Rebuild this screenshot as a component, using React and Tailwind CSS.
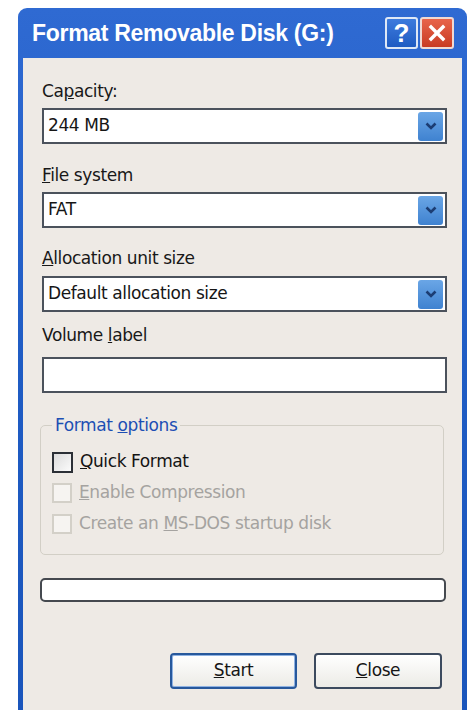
import React from "react";

const font = { fontFamily: '"DejaVu Sans", Verdana, sans-serif' };

const Combo = ({ value }) => (
  <div className="flex h-[36px] items-center justify-between border-2 border-[#4b525c] bg-white pl-[4px] pr-[2px]">
    <span className="text-[17px] tracking-[-0.4px] text-[#161616]">{value}</span>
    <div className="flex h-[29px] w-[25px] items-center justify-center rounded-[3px] bg-gradient-to-b from-[#6aa6e6] to-[#3f82d0]">
      <svg width="12" height="8" viewBox="0 0 12 8">
        <path d="M1.5 1.5 L6 6 L10.5 1.5" fill="none" stroke="#1c3d73" strokeWidth="2.6" />
      </svg>
    </div>
  </div>
);

const Check = ({ children, disabled }) => (
  <div className="flex h-[31px] items-center gap-[7px]">
    <div
      className={
        disabled
          ? "h-[20px] w-[20px] border-2 border-[#d3d0c8] bg-[#f6f4f1]"
          : "h-[21px] w-[21px] border-2 border-[#2b2f36] bg-gradient-to-br from-[#dcdcdc] to-[#fbfbfb]"
      }
    />
    <span
      className={
        disabled
          ? "text-[17px] tracking-[-0.4px] text-[#a5a3a0]"
          : "text-[17px] tracking-[-0.4px] text-[#141414]"
      }
    >
      {children}
    </span>
  </div>
);

export default function App() {
  return (
    <div className="h-[710px] overflow-hidden bg-white pl-[18px] pt-[8px]" style={font}>
      <div className="flex h-[710px] w-[449px] flex-col rounded-t-[9px] bg-gradient-to-b from-[#2f6ad2] via-[#1f5cc4] to-[#1a55bb] px-[5px]">
        {/* title bar */}
        <div className="flex h-[50px] items-center justify-between pl-[9px] pr-[8px]">
          <span
            className="text-[23px] font-bold tracking-[-0.3px] text-white"
            style={{ fontFamily: '"Liberation Sans", Arial, sans-serif' }}
          >
            Format Removable Disk (G:)
          </span>
          <div className="flex gap-[2px]">
            <div className="flex h-[32px] w-[33px] items-center justify-center rounded-[3px] border-2 border-[#dfe8f6] bg-gradient-to-b from-[#3d7bdd] to-[#1f5bc2] text-[26px] font-bold leading-none text-white" style={{ fontFamily: '"Liberation Sans", Arial, sans-serif' }}>
              ?
            </div>
            <div className="flex h-[32px] w-[34px] items-center justify-center rounded-[3px] border-2 border-[#f1d9d2] bg-gradient-to-b from-[#e8644a] to-[#c83a22]">
              <svg width="18" height="18" viewBox="0 0 18 18">
                <path d="M3 3 L15 15 M15 3 L3 15" stroke="#fff" strokeWidth="3.4" strokeLinecap="square" />
              </svg>
            </div>
          </div>
        </div>

        {/* dialog body */}
        <div className="flex flex-1 flex-col bg-[#eeeae5] pl-[19px] pr-[15px] pt-[23px] text-[#181818]">
          <span className="text-[17px] leading-[20px] tracking-[-0.4px]">
            Ca<u>p</u>acity:
          </span>
          <div className="mt-[7px]">
            <Combo value="244 MB" />
          </div>

          <span className="mt-[21px] text-[17px] leading-[20px] tracking-[-0.4px]">
            <u>F</u>ile system
          </span>
          <div className="mt-[7px]">
            <Combo value="FAT" />
          </div>

          <span className="mt-[20px] text-[17px] leading-[20px] tracking-[-0.4px]">
            <u>A</u>llocation unit size
          </span>
          <div className="mt-[8px]">
            <Combo value="Default allocation size" />
          </div>

          <span className="mt-[13px] text-[17px] leading-[20px] tracking-[-0.4px]">
            Volume <u>l</u>abel
          </span>
          <div className="mt-[12px] h-[36px] border-2 border-[#4b525c] bg-white" />

          {/* format options group */}
          <fieldset className="mt-[20px] mr-[3px] -ml-[2px] rounded-[5px] border border-[#d2cfc6] px-[11px] pb-[14px] pt-[8px]">
            <legend className="px-[3px] text-[17px] tracking-[-0.4px] text-[#1d4fb4]">
              Format <u>o</u>ptions
            </legend>
            <Check>
              <u>Q</u>uick Format
            </Check>
            <Check disabled>
              <u>E</u>nable Compression
            </Check>
            <Check disabled>
              Create an <u>M</u>S-DOS startup disk
            </Check>
          </fieldset>

          {/* progress bar */}
          <div className="mt-[23px] mr-[1px] -ml-[2px] h-[24px] rounded-[5px] border-2 border-[#45494f] bg-white" />

          <div className="mt-[51px] flex justify-end gap-[17px] pr-[5px]">
            <button className="h-[36px] w-[127px] rounded-[4px] border-2 border-[#27589c] bg-gradient-to-b from-white to-[#ecebe6] text-[17px] tracking-[-0.4px] text-[#161616] shadow-[inset_0_0_0_1px_#8fb2e2]">
              <u>S</u>tart
            </button>
            <button className="h-[36px] w-[128px] rounded-[4px] border-2 border-[#3c4a5e] bg-gradient-to-b from-white to-[#ecebe6] text-[17px] tracking-[-0.4px] text-[#161616]">
              <u>C</u>lose
            </button>
          </div>
        </div>
      </div>
    </div>
  );
}
